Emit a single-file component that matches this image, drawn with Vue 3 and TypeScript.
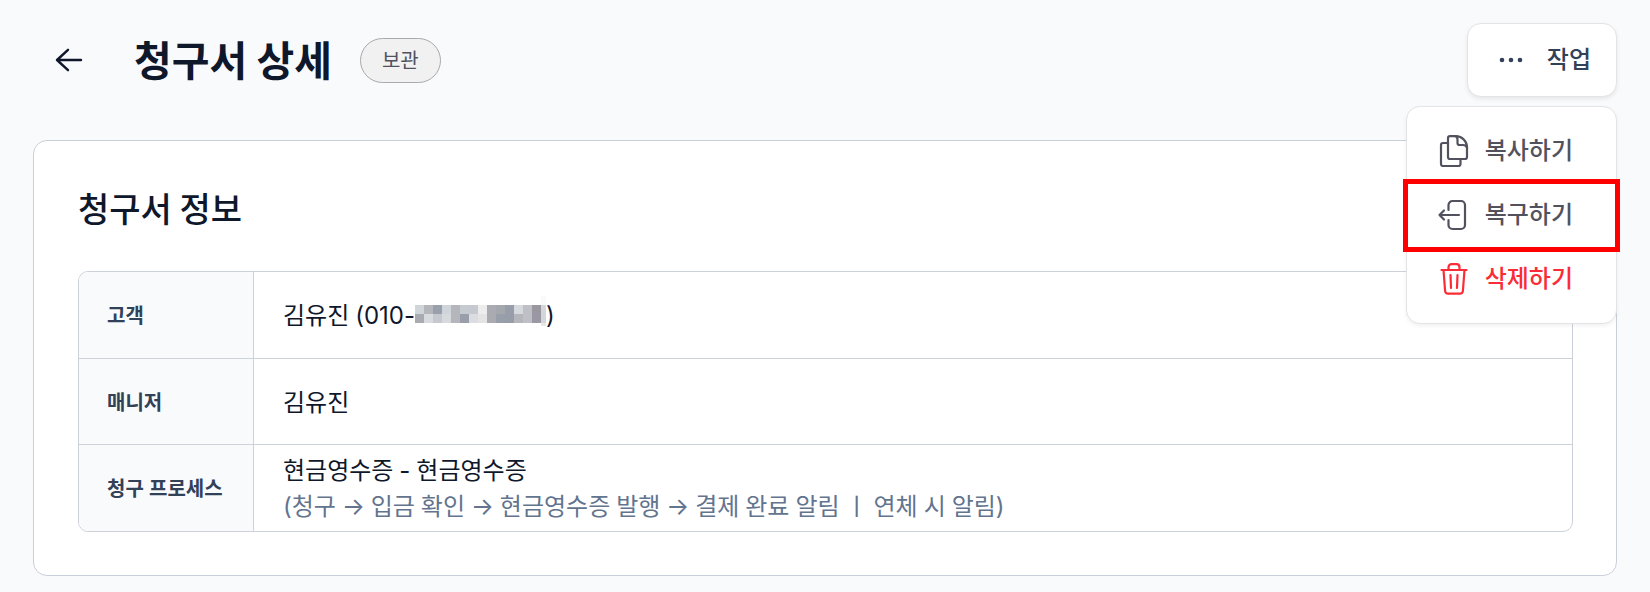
<script setup lang="ts">
interface InfoRow {
  label: string
  text: string
  masked?: boolean
  note?: string
}

interface Run {
  text: string
  latin: boolean
}

const rows: InfoRow[] = [
  { label: '고객', text: '김유진 (010-', masked: true },
  { label: '매니저', text: '김유진' },
  {
    label: '청구 프로세스',
    text: '현금영수증 - 현금영수증',
    note: '(청구 → 입금 확인 → 현금영수증 발행 → 결제 완료 알림 ㅣ 연체 시 알림)',
  },
]

// Splits a string so that digits and symbols are set in the Latin face.
function runs(text: string): Run[] {
  return text
    .split(/([^가-힣ㅣ\s]+)/)
    .map((part, i) => ({ text: part, latin: i % 2 === 1 }))
    .filter((run) => run.text !== '')
}

const mask: string[][] = [
  ['#d0d5da', '#b5b6bc', '#99a0ac', '#d0d5db', '#b5b6bc', '#c6cad1', '#c6c9cf', '#ededee', '#a9abb2', '#a5a7ae', '#979eaa', '#d6dade', '#bfc0c6', '#9a97a1'],
  ['#aaabb2', '#d7dbdf', '#c5c8ce', '#d6dade', '#b5b6bb', '#989faa', '#dcdde0', '#e4e4e6', '#a9abb1', '#989faa', '#979eaa', '#b5b6bb', '#bfc0c6', '#9a98a2'],
]
</script>

<template>
  <main class="page">
    <header class="top">
      <button class="back" type="button" aria-label="뒤로">
        <svg width="30" height="30" viewBox="0 0 30 30" fill="none" stroke="currentColor" stroke-width="2.4" stroke-linecap="round" stroke-linejoin="round">
          <path d="M27 15H3M14 4.8 3 15l11 10.2" />
        </svg>
      </button>
      <h1 class="title">청구서 상세</h1>
      <span class="badge">보관</span>

      <div class="actions">
        <button class="trigger" type="button" aria-haspopup="menu" aria-expanded="true">
          <svg width="24" height="24" viewBox="0 0 24 24" fill="currentColor">
            <circle cx="3" cy="12" r="2.3" />
            <circle cx="12" cy="12" r="2.3" />
            <circle cx="21" cy="12" r="2.3" />
          </svg>
          작업
        </button>
        <div class="menu" role="menu">
          <button class="item" type="button" role="menuitem">
            <svg width="32" height="32" viewBox="0 0 32 32" fill="none" stroke="currentColor" stroke-width="2.2" stroke-linecap="round" stroke-linejoin="round">
              <path d="M10 8H6a2 2 0 0 0-2 2v19a2 2 0 0 0 2 2h15.500a2 2 0 0 0 2-2v-5" />
              <path d="M13 1.200h6c6 0 11 5 11 11V22a2 2 0 0 1-2 2H13a2 2 0 0 1-2-2V3.200a2 2 0 0 1 2-2Z" />
              <path d="M18.500 1.200c1.500.6 2 1.600 2 3.300V8a2 2 0 0 0 2 2H26c2 0 3.300.8 4 2.500" />
            </svg>
            복사하기
          </button>
          <button class="item focused" type="button" role="menuitem">
            <svg width="32" height="32" viewBox="0 0 32 32" fill="none" stroke="currentColor" stroke-width="2.2" stroke-linecap="round" stroke-linejoin="round">
              <path d="M11.500 11V6a4 4 0 0 1 4-4H24a4 4 0 0 1 4 4v20a4 4 0 0 1-4 4h-8.500a4 4 0 0 1-4-4v-5" />
              <path d="M22 16H2.500M7 11.500 2.500 16 7 20.500" />
            </svg>
            복구하기
          </button>
          <button class="item danger" type="button" role="menuitem">
            <svg width="32" height="32" viewBox="0 0 32 32" fill="none" stroke="currentColor" stroke-width="2.2" stroke-linecap="round" stroke-linejoin="round">
              <path d="M4.500 7h25M6.500 7l1.600 21a3 3 0 0 0 3 2.700h11.800a3 3 0 0 0 3-2.700l1.600-21" />
              <path d="M11.500 7V4.200a3 3 0 0 1 3-3h5a3 3 0 0 1 3 3V7M13.500 12l.5 13M20.500 12l-.5 13" />
            </svg>
            삭제하기
          </button>
        </div>
      </div>
    </header>

    <section class="card">
      <h2 class="heading">청구서 정보</h2>
      <table class="info">
        <tbody>
          <tr v-for="row in rows" :key="row.label">
            <th scope="row">{{ row.label }}</th>
            <td>
              <div class="line">
                <span class="value"><span v-for="(run, i) in runs(row.text)" :key="i" :class="run.latin ? 'latin' : 'hangul'">{{ run.text }}</span></span>
                <template v-if="row.masked">
                  <svg width="131" height="36" viewBox="0 0 131 36" shape-rendering="crispEdges" aria-hidden="true">
                    <g v-for="(line, y) in mask" :key="y">
                      <rect v-for="(fill, x) in line" :key="x" :x="x * 9" :y="9 + y * 9" width="9" height="9" :fill="fill" />
                    </g>
                    <rect x="126" y="0" width="5" height="9" fill="#f9fafb" />
                    <rect x="126" y="9" width="5" height="18" fill="#d3d6db" />
                    <rect x="126" y="27" width="5" height="3" fill="#e6e7e9" />
                  </svg>
                  <span class="value"><span class="latin">)</span></span>
                </template>
              </div>
              <div v-if="row.note" class="value note"><span v-for="(run, i) in runs(row.note)" :key="i" :class="run.latin ? 'latin' : 'hangul'">{{ run.text }}</span></div>
            </td>
          </tr>
        </tbody>
      </table>
    </section>
  </main>
</template>

<style>
body {
  margin: 0;
  background: #f9fafc;
}
</style>

<style scoped>
.page {
  box-sizing: border-box;
  min-height: 100vh;
  padding: 23px 33px 16px;
  background: #f9fafc;
  color: #0f172b;
  font-family: "Noto Sans CJK KR", sans-serif;
  font-size: 24px;
  line-height: 36px;
}

.latin {
  font-family: Inter, "Noto Sans CJK KR", sans-serif;
  line-height: 24px;
}

.hangul {
  font-family: Roboto, "Noto Sans CJK KR", sans-serif;
  line-height: 24px;
}

.value {
  white-space: pre-wrap;
}

button {
  margin: 0;
  border: 0;
  padding: 0;
  background: none;
  color: inherit;
  font: inherit;
  font-family: Inter, "Noto Sans CJK KR", sans-serif;
  cursor: pointer;
}

svg {
  display: block;
  flex: none;
}

.top {
  display: flex;
  align-items: center;
  padding-left: 12px;
}

.back {
  display: grid;
  place-items: center;
  width: 48px;
  height: 48px;
}

.title {
  margin: 0 28px 0 41px;
  padding-bottom: 4px;
  font-size: 41px;
  font-weight: 700;
  line-height: 58px;
}

.badge {
  border: 1px solid #a9a9b0;
  border-radius: 24px;
  padding: 6px 21px 7px;
  background: #f1f1f2;
  color: #52525e;
  font-size: 20px;
  line-height: 30px;
}

.actions {
  position: relative;
  margin-left: auto;
}

.trigger {
  display: flex;
  align-items: center;
  gap: 24px;
  border: 1px solid #e4e4e7;
  border-radius: 14px;
  padding: 18px 25px 18px 31px;
  background: #fff;
  box-shadow: 0 2px 4px rgb(0 0 0 / 8%);
  color: #314158;
  font-weight: 500;
}

.menu {
  position: absolute;
  z-index: 1;
  top: calc(100% + 9px);
  right: 0;
  border: 1px solid #e4e4e7;
  border-radius: 14px;
  padding: 12px 0;
  background: #fff;
  box-shadow: 0 2px 4px rgb(0 0 0 / 6%);
  color: #52525e;
}

.item {
  display: flex;
  align-items: center;
  gap: 16px;
  width: 100%;
  height: 64px;
  padding: 0 43px 0 30px;
  font-weight: 500;
  white-space: nowrap;
}

.focused {
  position: relative;
}

.focused::after {
  content: "";
  position: absolute;
  inset: -4px -4px -5px;
  border: 5px solid #f00;
}

.danger {
  color: #fb2c36;
}

.card {
  margin-top: 43px;
  border: 1px solid #cad0da;
  border-radius: 14px;
  padding: 44px 43px 43px 44px;
  background: #fff;
}

.heading {
  margin: 0 0 40px;
  font-size: 34px;
  font-weight: 500;
  line-height: 46px;
}

.info {
  width: 100%;
  overflow: hidden;
  border: 1px solid #cdd1da;
  border-spacing: 0;
  border-radius: 10px;
}

th,
td {
  box-sizing: border-box;
  height: 86px;
  padding: 0 28px;
  border-bottom: 1px solid #cdd1da;
  text-align: left;
  vertical-align: middle;
}

tr:first-child > * {
  height: 87px;
}

tr:last-child > * {
  border-bottom: 0;
}

th {
  width: 175px;
  padding-top: 2px;
  border-right: 1px solid #cdd1da;
  background: #f9fafc;
  color: #314158;
  font-family: "Noto Sans", "Noto Sans CJK KR", sans-serif;
  font-size: 20px;
  font-weight: 700;
  white-space: nowrap;
}

td {
  padding-bottom: 2px;
  padding-left: 29px;
}

.line {
  display: flex;
  align-items: center;
}

.note {
  color: #62748e;
}
</style>
